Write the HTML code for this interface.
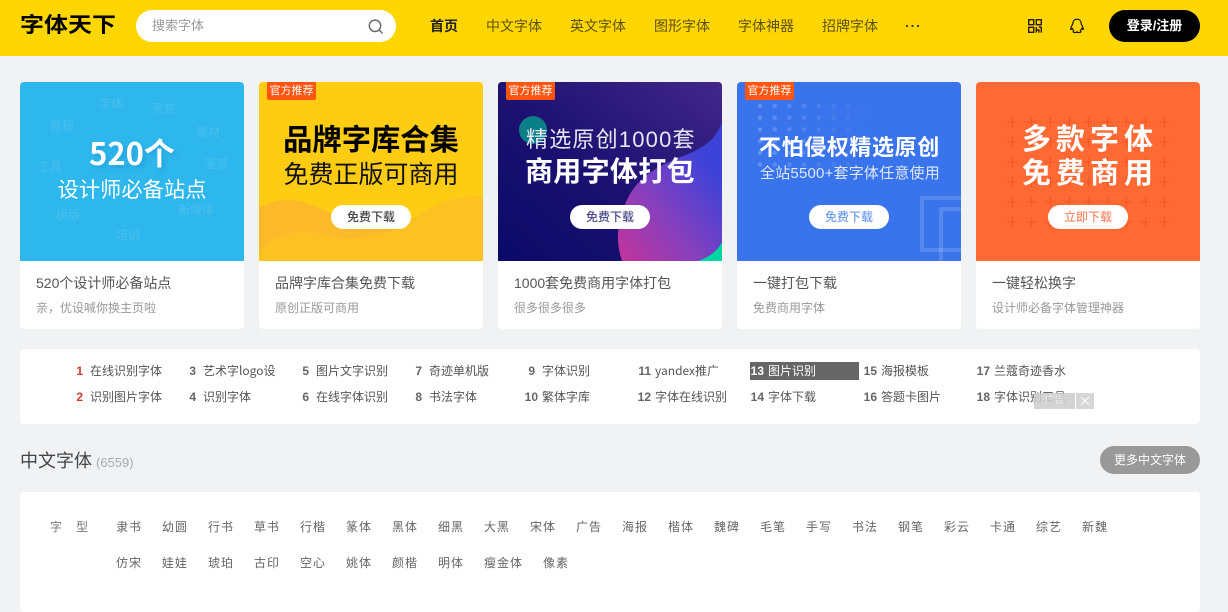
<!DOCTYPE html>
<html lang="zh"><head><meta charset="utf-8"><title>字体天下</title>
<style>
html,body{margin:0;padding:0}
body{width:1228px;height:572px;overflow:hidden;position:relative;background:#f1f2f4;font-family:"Liberation Sans","Noto Sans CJK SC",sans-serif;color:#555}
.t{position:absolute;white-space:nowrap;line-height:20px}
.hd{position:absolute;left:0;top:0;width:1228px;height:56px;background:#ffd600}
.nav{font-size:14px;top:16px;color:#5c5212}
.card{position:absolute;top:82px;width:224px;height:247px;background:#fff;border-radius:4px;overflow:hidden}
.img{position:absolute;left:0;top:0;width:224px;height:179px;overflow:hidden}
.badge{position:absolute;left:8px;top:0;width:49px;height:18px;background:#ff5510;color:#fff;font-size:11px;line-height:18px;text-align:center;border-radius:0 0 2px 2px}
.btn{position:absolute;left:72px;top:123px;width:80px;height:24px;border-radius:12px;background:#fff;font-size:12px;font-weight:500;line-height:24px;text-align:center}
.ct{left:16px;top:191px;font-size:14px;color:#555}
.cs{left:16px;top:216px;font-size:12px;color:#999}
.g{font-size:12px;color:rgba(255,255,255,.13)}
.panel{position:absolute;background:#fff;border-radius:4px}
.n,.h{font-size:12px;color:#555}
.n{font-weight:700;color:#666;text-align:right;width:24px}
.h{color:#555;font-family:"Noto Sans CJK SC",sans-serif}
.tag{font-size:12px;letter-spacing:1px;color:#666;top:517px}
.tag2{top:553px}
</style></head><body>
<div class="hd"></div>
<div class="t" style="left:20px;top:11px;line-height:30px;font-size:24px;font-weight:700;color:#000;transform:scaleY(.88)">字体天下</div>
<div style="position:absolute;left:136px;top:10px;width:260px;height:32px;border-radius:16px;background:#fff"></div>
<div class="t" style="left:152px;top:16px;font-size:13px;color:#999">搜索字体</div>
<svg style="position:absolute;left:367px;top:18px" width="17" height="17" viewBox="0 0 17 17" fill="none" stroke="#666" stroke-width="1.4"><circle cx="8" cy="7.8" r="5.7"/><path d="M12.2 12l3 3" stroke-linecap="round"/></svg>
<div class="t nav" style="left:430px;font-weight:700;color:#222">首页</div>
<div class="t nav" style="left:486px">中文字体</div>
<div class="t nav" style="left:570px">英文字体</div>
<div class="t nav" style="left:654px">图形字体</div>
<div class="t nav" style="left:738px">字体神器</div>
<div class="t nav" style="left:822px">招牌字体</div>
<svg style="position:absolute;left:905px;top:24px" width="16" height="4" fill="#333"><circle cx="2" cy="2" r="1.1"/><circle cx="7.5" cy="2" r="1.1"/><circle cx="13" cy="2" r="1.1"/></svg>
<svg style="position:absolute;left:1028px;top:19px" width="14" height="14" fill="none" stroke="#2a1a00" stroke-width="1.4"><rect x=".7" y=".7" width="5" height="5"/><rect x="8.3" y=".7" width="5" height="5"/><rect x=".7" y="8.3" width="5" height="5"/><path d="M8.3 8v5.6M8.300 11h2.600v2.600M13.300 8v5.600M10.900 8h2.400"/></svg>
<svg style="position:absolute;left:1069px;top:18px" width="16" height="16" viewBox="0 0 16 16" fill="none" stroke="#1c1600" stroke-width="1.2" stroke-linejoin="round"><path d="M8 1.2c-2.900 0-4.200 2.200-4.200 4.700C3 7.400 1.800 9.500 1.600 11.200c.4.600 1.100 0 1.800-.8.300 1.100.7 1.800 1.400 2.400-.8.400-1 1.300 0 1.600 1.200.3 2.500 0 3.200-.5.700.5 2 .8 3.200.5 1-.3.800-1.200 0-1.600.7-.6 1.100-1.300 1.400-2.400.7.800 1.400 1.400 1.800.8-.2-1.700-1.400-3.800-2.200-5.300C12.200 3.400 10.900 1.200 8 1.200z"/></svg>
<div style="position:absolute;left:1109px;top:10px;width:91px;height:32px;border-radius:16px;background:#000;color:#fff;font-size:13px;font-weight:700;line-height:32px;text-align:center">登录/注册</div>

<!-- card 1 -->
<div class="card" style="left:20px"><div class="img" style="background:#2db7ed">
<div class="t g" style="left:79px;top:12px">字体</div><div class="t g" style="left:132px;top:17px">灵感</div><div class="t g" style="left:30px;top:34px">教程</div><div class="t g" style="left:176px;top:40px">素材</div><div class="t g" style="left:18px;top:75px">工具</div><div class="t g" style="left:184px;top:72px">漫画</div><div class="t g" style="left:36px;top:123px">模版</div><div class="t g" style="left:158px;top:118px">新媒体</div><div class="t g" style="left:96px;top:143px">培训</div>
<div class="t" style="left:0;width:224px;text-align:center;top:50px;line-height:40px;font-size:31px;font-family:'Noto Sans CJK SC',sans-serif;font-weight:700;color:#fff;text-shadow:3px 3px 4px rgba(30,130,190,.35)">520个</div>
<div class="t" style="left:0;width:224px;text-align:center;top:94px;line-height:28px;font-size:21.300px;color:#fff">设计师必备站点</div>
</div>
<div class="t ct">520个设计师必备站点</div><div class="t cs">亲，优设喊你换主页啦</div></div>

<!-- card 2 -->
<div class="card" style="left:259px"><div class="img" style="background:#fdcc13">
<svg style="position:absolute;left:0;top:0" width="224" height="179"><path d="M0 125C12 120 20 118 30 118C50 118 70 132 95 142C115 150 140 146 160 133C180 120 200 112 224 115V179H0Z" fill="#fdc122"/><path d="M0 125C12 120 20 118 30 118C50 118 70 132 95 142C115 150 140 146 161 133C140 148 120 155 91 157C70 155 60 150 45 150C25 150 12 158 0 170Z" fill="#fcb92a"/></svg>
<div class="badge">官方推荐</div>
<div class="t" style="left:0;width:224px;text-align:center;top:39px;line-height:40px;font-size:29.300px;font-weight:700;color:#000">品牌字库合集</div>
<div class="t" style="left:0;width:224px;text-align:center;top:76px;line-height:34px;font-size:25px;color:#111">免费正版可商用</div>
<div class="btn" style="color:#444">免费下载</div>
</div>
<div class="t ct">品牌字库合集免费下载</div><div class="t cs">原创正版可商用</div></div>

<!-- card 3 -->
<div class="card" style="left:498px"><div class="img" style="background:#0b0a68">
<svg style="position:absolute;left:0;top:0" width="224" height="179">
<defs><linearGradient id="a" x1="0" y1="1" x2="1" y2="0"><stop offset="0" stop-color="#0a0a68"/><stop offset=".45" stop-color="#1b1070"/><stop offset="1" stop-color="#41288a"/></linearGradient>
<linearGradient id="b" gradientUnits="userSpaceOnUse" x1="125" y1="179" x2="224" y2="100"><stop offset="0" stop-color="#c0349c"/><stop offset=".5" stop-color="#8340bf"/><stop offset="1" stop-color="#3d42d8"/></linearGradient></defs>
<rect width="224" height="179" fill="url(#a)"/>
<path d="M224 40C218 58 205 66 190 72C165 82 140 92 128 120C118 145 118 160 124 179H200C212 175 220 168 224 160Z" fill="url(#b)"/>
<path d="M200 179C212 175 220 168 224 160V179Z" fill="#00d6a0"/>
<circle cx="35" cy="48" r="14" fill="#0a8086"/></svg>
<div class="badge">官方推荐</div>
<div class="t" style="left:28px;top:42px;line-height:32px;font-size:22px;letter-spacing:1.200px;color:#e8e8f4">精选原创1000套</div>
<div class="t" style="left:27px;top:70px;line-height:40px;font-size:28px;font-weight:700;letter-spacing:.3px;color:#fff">商用字体打包</div>
<div class="btn" style="color:#4a4a8c">免费下载</div>
</div>
<div class="t ct">1000套免费商用字体打包</div><div class="t cs">很多很多很多</div></div>

<!-- card 4 -->
<div class="card" style="left:737px"><div class="img" style="background:#3a74ec">
<svg style="position:absolute;left:0;top:0" width="224" height="179">
<defs><pattern id="d" x="16" y="18" width="14.700" height="11.700" patternUnits="userSpaceOnUse"><circle cx="7" cy="6" r="2.200" fill="#fff"/></pattern>
<linearGradient id="e" x1="0" x2="1" y1="0" y2="0"><stop offset="0" stop-color="#fff" stop-opacity=".22"/><stop offset="1" stop-color="#fff" stop-opacity="0"/></linearGradient>
<mask id="f"><rect x="16" y="0" width="120" height="100" fill="url(#e)"/></mask></defs>
<rect x="16" y="18" width="120" height="70" fill="url(#d)" mask="url(#f)"/>
<rect x="185" y="116" width="60" height="52" fill="none" stroke="#fff" stroke-opacity=".15" stroke-width="4"/>
<rect x="204" y="127" width="50" height="60" fill="none" stroke="#fff" stroke-opacity=".15" stroke-width="4"/></svg>
<div class="badge">官方推荐</div>
<div class="t" style="left:22px;top:50px;line-height:32px;font-size:22px;font-weight:700;letter-spacing:.6px;color:#fff">不怕侵权精选原创</div>
<div class="t" style="left:23px;top:80px;line-height:24px;font-size:15px;letter-spacing:.2px;color:#dfe8fb">全站5500+套字体任意使用</div>
<div class="btn" style="color:#6f9df0">免费下载</div>
</div>
<div class="t ct">一键打包下载</div><div class="t cs">免费商用字体</div></div>

<!-- card 5 -->
<div class="card" style="left:976px"><div class="img" style="background:#ff6934">
<svg style="position:absolute;left:0;top:0" width="224" height="179"><defs><pattern id="p" x="27" y="30" width="19" height="20" patternUnits="userSpaceOnUse"><path d="M9.500 5v10M4.500 10h10" stroke="#f4561f" stroke-width="1.100" fill="none"/></pattern></defs><rect x="27" y="30" width="171" height="120" fill="url(#p)"/></svg>
<div class="t" style="left:46px;top:38px;line-height:40px;font-size:29px;font-weight:700;letter-spacing:5px;color:#fff">多款字体</div>
<div class="t" style="left:46px;top:72px;line-height:40px;font-size:29px;font-weight:700;letter-spacing:5px;color:#fff">免费商用</div>
<div class="btn" style="color:#f98a6a">立即下载</div>
</div>
<div class="t ct">一键轻松换字</div><div class="t cs">设计师必备字体管理神器</div></div>

<!-- hot list -->
<div class="panel" style="left:20px;top:349px;width:1180px;height:75px"></div>
<div style="position:absolute;left:750px;top:362px;width:109px;height:18px;background:#666"></div>
<div class="t n" style="left:59px;top:361px;color:#d2392c">1</div><div class="t h" style="left:90px;top:361px">在线识别字体</div>
<div class="t n" style="left:59px;top:387px;color:#d2392c">2</div><div class="t h" style="left:90px;top:387px">识别图片字体</div>
<div class="t n" style="left:172px;top:361px">3</div><div class="t h" style="left:203px;top:361px">艺术字logo设</div>
<div class="t n" style="left:172px;top:387px">4</div><div class="t h" style="left:203px;top:387px">识别字体</div>
<div class="t n" style="left:285px;top:361px">5</div><div class="t h" style="left:316px;top:361px">图片文字识别</div>
<div class="t n" style="left:285px;top:387px">6</div><div class="t h" style="left:316px;top:387px">在线字体识别</div>
<div class="t n" style="left:398px;top:361px">7</div><div class="t h" style="left:429px;top:361px">奇迹单机版</div>
<div class="t n" style="left:398px;top:387px">8</div><div class="t h" style="left:429px;top:387px">书法字体</div>
<div class="t n" style="left:511px;top:361px">9</div><div class="t h" style="left:542px;top:361px">字体识别</div>
<div class="t n" style="left:514px;top:387px">10</div><div class="t h" style="left:542px;top:387px">繁体字库</div>
<div class="t n" style="left:627px;top:361px">11</div><div class="t h" style="left:655px;top:361px">yandex推广</div>
<div class="t n" style="left:627px;top:387px">12</div><div class="t h" style="left:655px;top:387px">字体在线识别</div>
<div class="t n" style="left:740px;top:361px;color:#fff">13</div><div class="t h" style="left:768px;top:361px;color:#fff">图片识别</div>
<div class="t n" style="left:740px;top:387px">14</div><div class="t h" style="left:768px;top:387px">字体下载</div>
<div class="t n" style="left:853px;top:361px">15</div><div class="t h" style="left:881px;top:361px">海报模板</div>
<div class="t n" style="left:853px;top:387px">16</div><div class="t h" style="left:881px;top:387px">答题卡图片</div>
<div class="t n" style="left:966px;top:361px">17</div><div class="t h" style="left:994px;top:361px">兰蔻奇迹香水</div>
<div class="t n" style="left:966px;top:387px">18</div><div class="t h" style="left:994px;top:387px">字体识别工具</div>
<div style="position:absolute;left:1034px;top:393px;width:41px;height:16px;background:rgba(204,204,204,.85);color:#eee;font-size:10px;line-height:16px;text-align:center">广告</div>
<svg style="position:absolute;left:1076px;top:393px" width="18" height="16"><rect width="18" height="16" fill="#d6d6d6"/><path d="M5 4l8 8M13 4l-8 8" stroke="#fff" fill="none"/></svg>

<!-- section -->
<div class="t" style="left:20px;top:449px;line-height:24px;font-size:18px;color:#444">中文字体</div>
<div class="t" style="left:96px;top:453px;font-size:13px;color:#aaa">(6559)</div>
<div style="position:absolute;left:1100px;top:446px;width:100px;height:28px;border-radius:14px;background:#999;color:#fff;font-size:12px;line-height:28px;text-align:center">更多中文字体</div>
<div class="panel" style="left:20px;top:492px;width:1180px;height:120px"></div>
<div class="t tag" style="left:50px;letter-spacing:0;color:#777">字</div><div class="t tag" style="left:76px;letter-spacing:0;color:#777">型</div>
<div class="t tag" style="left:116px">隶书</div><div class="t tag" style="left:162px">幼圆</div><div class="t tag" style="left:208px">行书</div><div class="t tag" style="left:254px">草书</div><div class="t tag" style="left:300px">行楷</div><div class="t tag" style="left:346px">篆体</div><div class="t tag" style="left:392px">黑体</div><div class="t tag" style="left:438px">细黑</div><div class="t tag" style="left:484px">大黑</div><div class="t tag" style="left:530px">宋体</div><div class="t tag" style="left:576px">广告</div><div class="t tag" style="left:622px">海报</div><div class="t tag" style="left:668px">楷体</div><div class="t tag" style="left:714px">魏碑</div><div class="t tag" style="left:760px">毛笔</div><div class="t tag" style="left:806px">手写</div><div class="t tag" style="left:852px">书法</div><div class="t tag" style="left:898px">钢笔</div><div class="t tag" style="left:944px">彩云</div><div class="t tag" style="left:990px">卡通</div><div class="t tag" style="left:1036px">综艺</div><div class="t tag" style="left:1082px">新魏</div>
<div class="t tag tag2" style="left:116px">仿宋</div><div class="t tag tag2" style="left:162px">娃娃</div><div class="t tag tag2" style="left:208px">琥珀</div><div class="t tag tag2" style="left:254px">古印</div><div class="t tag tag2" style="left:300px">空心</div><div class="t tag tag2" style="left:346px">姚体</div><div class="t tag tag2" style="left:392px">颜楷</div><div class="t tag tag2" style="left:438px">明体</div><div class="t tag tag2" style="left:484px">瘦金体</div><div class="t tag tag2" style="left:543px">像素</div>
</body></html>
